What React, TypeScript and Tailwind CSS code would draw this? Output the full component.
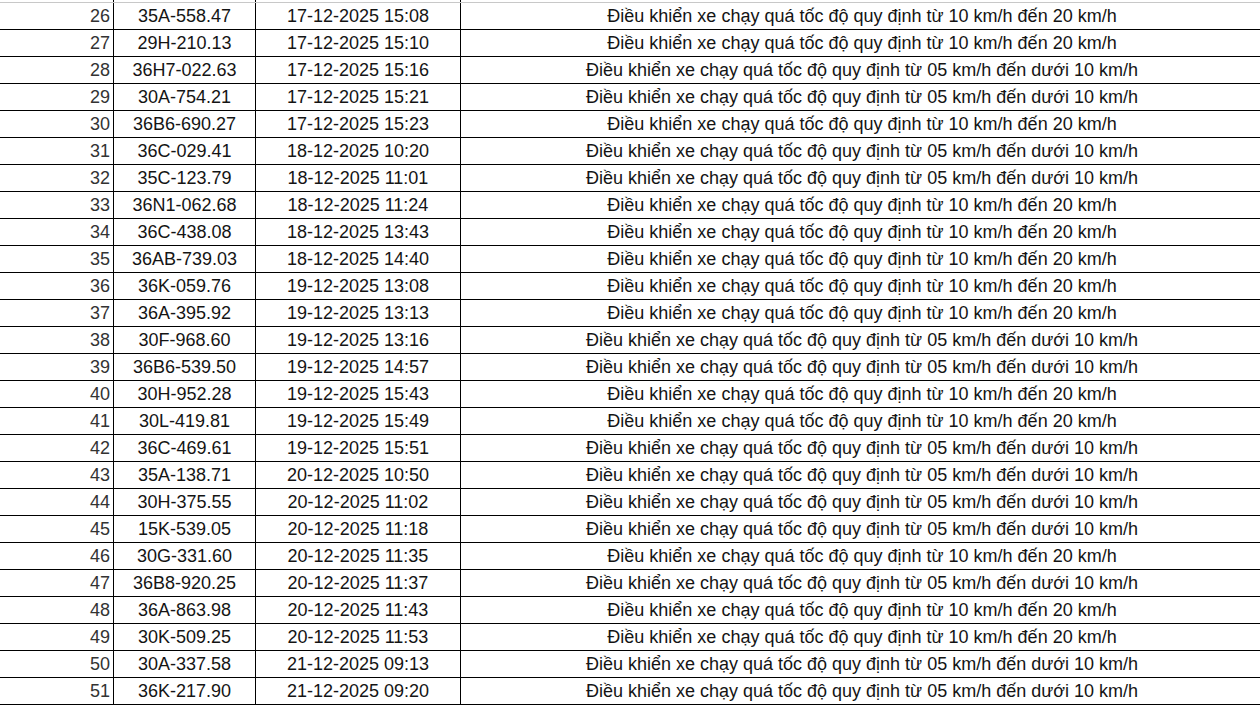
const A = "Điều khiển xe chạy quá tốc độ quy định từ 10 km/h đến 20 km/h";
const B = "Điều khiển xe chạy quá tốc độ quy định từ 05 km/h đến dưới 10 km/h";

const rows: [number, string, string, string][] = [
    [26, "35A-558.47", "17-12-2025 15:08", A],
    [27, "29H-210.13", "17-12-2025 15:10", A],
    [28, "36H7-022.63", "17-12-2025 15:16", B],
    [29, "30A-754.21", "17-12-2025 15:21", B],
    [30, "36B6-690.27", "17-12-2025 15:23", A],
    [31, "36C-029.41", "18-12-2025 10:20", B],
    [32, "35C-123.79", "18-12-2025 11:01", B],
    [33, "36N1-062.68", "18-12-2025 11:24", A],
    [34, "36C-438.08", "18-12-2025 13:43", A],
    [35, "36AB-739.03", "18-12-2025 14:40", A],
    [36, "36K-059.76", "19-12-2025 13:08", A],
    [37, "36A-395.92", "19-12-2025 13:13", A],
    [38, "30F-968.60", "19-12-2025 13:16", B],
    [39, "36B6-539.50", "19-12-2025 14:57", B],
    [40, "30H-952.28", "19-12-2025 15:43", A],
    [41, "30L-419.81", "19-12-2025 15:49", A],
    [42, "36C-469.61", "19-12-2025 15:51", B],
    [43, "35A-138.71", "20-12-2025 10:50", B],
    [44, "30H-375.55", "20-12-2025 11:02", B],
    [45, "15K-539.05", "20-12-2025 11:18", B],
    [46, "30G-331.60", "20-12-2025 11:35", A],
    [47, "36B8-920.25", "20-12-2025 11:37", B],
    [48, "36A-863.98", "20-12-2025 11:43", A],
    [49, "30K-509.25", "20-12-2025 11:53", A],
    [50, "30A-337.58", "21-12-2025 09:13", B],
    [51, "36K-217.90", "21-12-2025 09:20", B],
];

const cols = "grid grid-cols-[114px_142px_205px_802px]";

export default function App() {
    return (
        <div className="w-[1260px] h-[706px] overflow-hidden bg-white text-[18px] text-[#141414] font-['Liberation_Sans',Arial,sans-serif]">
            <div className="w-[1263px]">
                {/* cut-off row above */}
                <div className={`${cols} h-[3px] border-b border-[#c8c8c8]`}>
                    <div className="border-r border-black" />
                    <div className="border-r border-black" />
                    <div className="border-r border-black" />
                    <div />
                </div>

                {rows.map(([n, plate, time, desc]) => (
                    <div key={n} className={`${cols} h-[27px] border-b border-black leading-none`}>
                        <div className="border-r border-black flex items-center justify-end pr-[3px] text-[#333]">{n}</div>
                        <div className="border-r border-black flex items-center justify-center">{plate}</div>
                        <div className="border-r border-black flex items-center justify-center">{time}</div>
                        <div className="flex items-center justify-center whitespace-nowrap">{desc}</div>
                    </div>
                ))}
            </div>
        </div>
    )
}
